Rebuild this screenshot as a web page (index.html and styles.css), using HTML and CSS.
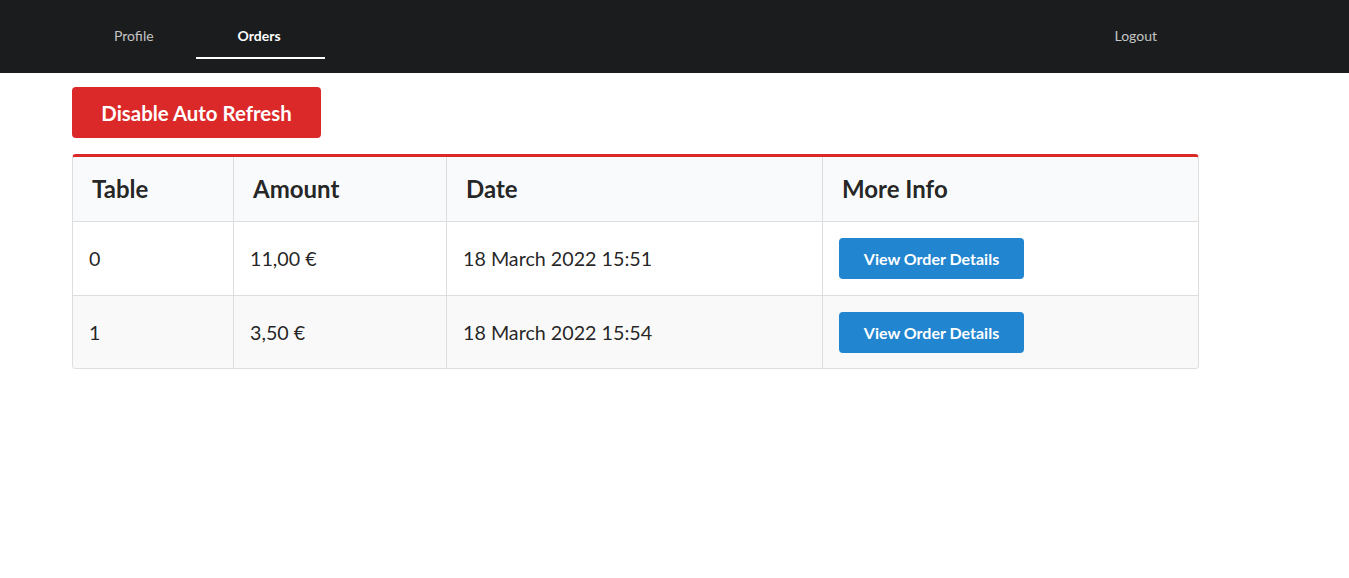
FILE: index.html
```html
<!DOCTYPE html>
<html>
<head>
<meta charset="utf-8">
<link rel="stylesheet" href="styles.css">
</head>
<body>
<nav class="navbar">
  <div class="nav-inner">
    <a class="nav-item">Profile</a>
    <a class="nav-item active">Orders</a>
    <a class="nav-item right">Logout</a>
  </div>
</nav>
<main class="content">
  <button class="btn btn-red">Disable Auto Refresh</button>
  <table class="orders">
    <thead>
      <tr>
        <th class="c1">Table</th>
        <th class="c2">Amount</th>
        <th class="c3">Date</th>
        <th class="c4">More Info</th>
      </tr>
    </thead>
    <tbody>
      <tr>
        <td>0</td>
        <td>11,00 €</td>
        <td>18 March 2022 15:51</td>
        <td><button class="btn btn-blue">View Order Details</button></td>
      </tr>
      <tr class="striped">
        <td>1</td>
        <td>3,50 €</td>
        <td>18 March 2022 15:54</td>
        <td><button class="btn btn-blue">View Order Details</button></td>
      </tr>
    </tbody>
  </table>
</main>
</body>
</html>
```
FILE: styles.css
```css
* { box-sizing: border-box; }
body {
  margin: 0;
  font-family: Lato, "Helvetica Neue", Arial, sans-serif;
  font-size: 14px;
  color: rgba(0,0,0,0.87);
  background: #fff;
}
.navbar {
  background: #1b1c1d;
  height: 73px;
}
.nav-inner {
  margin-left: 72px;
  width: 1127px;
  height: 73px;
  display: flex;
  align-items: flex-start;
}
.nav-item {
  display: flex;
  align-items: center;
  height: 59px;
  padding: 13px 42px 0;
  color: rgba(255,255,255,0.75);
  font-size: 14px;
  border-bottom: 2px solid transparent;
  cursor: pointer;
}
.nav-item.active {
  color: #fff;
  font-weight: 700;
  border-bottom-color: #fff;
  padding: 13px 44px 0 42px;
}
.nav-item.right { margin-left: auto; }
.content {
  margin-left: 72px;
  width: 1127px;
  padding-top: 14px;
}
.btn {
  border: none;
  font-family: Lato, "Helvetica Neue", Arial, sans-serif;
  font-weight: 700;
  color: #fff;
  border-radius: 4px;
  cursor: pointer;
  display: block;
}
.btn-red {
  background: #db2828;
  width: 249px;
  height: 51px;
  font-size: 20.4px;
  padding: 0;
}
.btn-blue {
  background: #2185d0;
  width: 185px;
  height: 41px;
  font-size: 16px;
  padding: 0;
}
.orders {
  margin-top: 16px;
  width: 1127px;
  table-layout: fixed;
  border-collapse: separate;
  border-spacing: 0;
  border: 1px solid #dedede;
  border-top: 3px solid #db2828;
  border-radius: 4px;
  overflow: hidden;
}
.orders th {
  background: #f9fafb;
  text-align: left;
  font-size: 24px;
  font-weight: 700;
  line-height: 32px;
  padding: 16px 19px;
  border-bottom: 1px solid #dedede;
  color: rgba(0,0,0,0.87);
}
.orders th + th, .orders td + td { border-left: 1px solid #dedede; }
.c1 { width: 160px; }
.c2 { width: 213px; }
.c3 { width: 376px; }
.orders td {
  font-size: 19.7px;
  padding: 16px 16px;
  vertical-align: middle;
}
.orders tbody tr:first-child td { border-bottom: 1px solid #dedede; }
.orders tr.striped td { background: #f9f9f9; padding-bottom: 15px; }
```
